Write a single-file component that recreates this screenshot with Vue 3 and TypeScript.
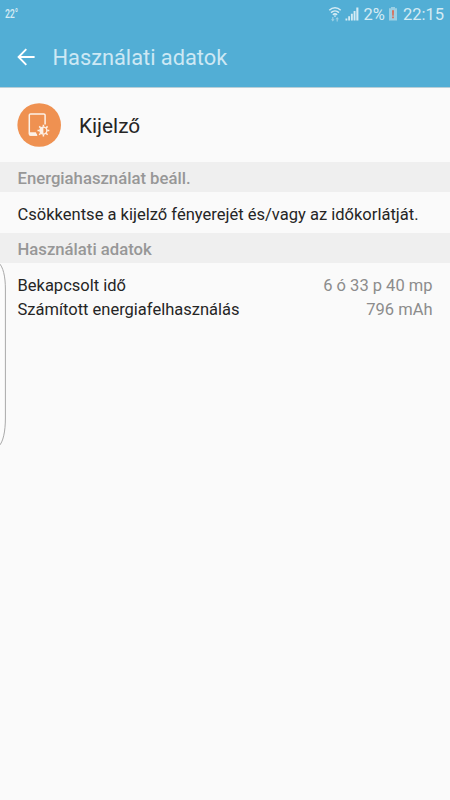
<script setup lang="ts">
import { ref } from 'vue'

type Usage = { label: string; value: string }

const title = 'Használati adatok'
const usages = ref<Usage[]>([
  { label: 'Bekapcsolt idő', value: '6 ó 33 p 40 mp' },
  { label: 'Számított energiafelhasználás', value: '796 mAh' },
])
</script>

<template>
  <div class="screen">
    <header class="header">
      <div class="status-bar">
        <span class="temperature">22°</span>
        <svg class="wifi" width="14" height="16" viewBox="0 0 14 16">
          <g fill="none" stroke="#d5ebf4" stroke-width="1.5">
            <path d="M1.3 4.2C4.6 1 9.4 1 12.7 4.2" />
            <path d="M3 6.6c2.3-2.1 5.7-2.1 8 0" />
            <path d="M4.8 8.8c1.3-1.1 3.1-1.1 4.4 0" />
          </g>
          <path d="M5.6 9.4h2.8L7 11.2z" fill="#d5ebf4" />
          <path
            d="M4.2 11h1.2v2.2h1.2L4.8 15.5 3 13.2h1.2zM8.6 15.5h1.2v-2.2H11L9.2 11l-1.8 2.3h1.2z"
            fill="#9bd0e5"
          />
        </svg>
        <svg class="signal" width="14" height="14" viewBox="0 0 14 14">
          <path
            d="M.5 11.4h1.8v2H.5zM3.2 9.2H5v4.2H3.2zM5.9 6.7h1.9v6.7H5.9zM8.6 4h1.9v9.4H8.6zM11.3.6h2.1v12.8h-2.1z"
            fill="#d5ebf4"
          />
        </svg>
        <span class="percent">2%</span>
        <svg class="battery" width="10" height="14" viewBox="0 0 10 14">
          <path d="M3 0h4v1.3h2V13.5H1V1.3H3z" fill="#9bcfe4" />
          <path d="M4 3.2h2L5.8 8.8H4.2zM4.1 9.6h1.8v1.7H4.1z" fill="#d9705c" />
        </svg>
        <span class="clock">22:15</span>
      </div>
      <div class="app-bar">
        <svg class="back" width="18" height="18" viewBox="0 0 18 18">
          <path d="M9.3 1.2L1.6 9l7.7 7.8M1.8 9H17.6" fill="none" stroke="#fff" stroke-width="1.9" />
        </svg>
        <h1 class="title">{{ title }}</h1>
      </div>
    </header>

    <div class="item">
      <svg class="item-icon" width="44" height="44" viewBox="0 0 44 44">
        <circle cx="22.2" cy="22" r="21.8" fill="#ef9151" />
        <path
          d="M28.1 21.5V12.2a1.3 1.3 0 0 0-1.3-1.3H13.6a1.3 1.3 0 0 0-1.3 1.3v18.6a1.3 1.3 0 0 0 1.3 1.3H20"
          fill="none"
          stroke="#fdf1e7"
          stroke-width="1.5"
        />
        <path d="M12.3 29.2h6.5l1.7 3.5h-7.2q-1 0-1-1z" fill="#fdf1e7" />
        <circle cx="26.4" cy="27.6" r="3.5" fill="none" stroke="#fdf1e7" stroke-width="1.4" />
        <path d="M26.4 24.1a3.5 3.5 0 0 0 0 7z" fill="#fdf1e7" />
        <path
          d="M26.4 21.7v2M26.4 31.5v2M20.5 27.6h2M30.3 27.6h2M22.2 23.4l1.5 1.5M29.1 30.3l1.5 1.5M22.2 31.8l1.5-1.5M29.1 24.9l1.5-1.5"
          stroke="#fdf1e7"
          stroke-width="1.5"
        />
      </svg>
      <span class="item-name">Kijelző</span>
    </div>

    <h2 class="section">Energiahasználat beáll.</h2>
    <p class="advice">Csökkentse a kijelző fényerejét és/vagy az időkorlátját.</p>

    <h2 class="section">{{ title }}</h2>
    <div class="usages">
      <div v-for="usage in usages" :key="usage.label" class="usage">
        <span>{{ usage.label }}</span>
        <span class="usage-value">{{ usage.value }}</span>
      </div>
    </div>

    <!-- edge panel handle, floats over the list -->
    <svg class="edge-handle" width="8" height="186" viewBox="0 0 8 186">
      <path
        d="M-1 1C3 5 5.4 14 5.4 27V156C5.4 170 3 180 -1 184"
        fill="#fcfcfc"
        stroke="#a9a9a9"
        stroke-width="1"
      />
    </svg>
  </div>
</template>

<style>
body {
  background-color: #fafafa;
}
</style>

<style scoped>
.screen {
  position: relative;
  height: 800px;
  overflow: hidden;
  background-color: #fafafa;
  color: #252525;
  font-family: Roboto, sans-serif;
  font-size: 16.5px;
}

.header {
  height: 87px;
  background-color: #52aed5;
  border-bottom: 1px solid #b9cfd8;
}

.status-bar {
  display: flex;
  align-items: center;
  height: 28px;
  padding: 0 6px 0 5px;
  box-sizing: border-box;
  color: #d5ebf4;
  white-space: nowrap;
}

.temperature {
  margin-right: auto;
  font-size: 13px;
  font-weight: 500;
  line-height: 26px;
  letter-spacing: -0.3px;
  transform: scaleX(0.68);
  transform-origin: left;
}

.wifi {
  margin-top: -1px;
}

.signal {
  margin-left: 3px;
}

.percent {
  margin-left: 5px;
}

.battery {
  margin-left: 3px;
}

.clock {
  margin-left: 5px;
}

.app-bar {
  display: flex;
  align-items: center;
  height: 59px;
  padding-left: 17px;
}

.back {
  margin-top: -2px;
}

.title {
  margin: 0 0 0 17.5px;
  color: #cde8f4;
  font-size: 21.8px;
  font-weight: 400;
}

.item {
  display: flex;
  align-items: center;
  height: 74px;
  padding-left: 17px;
}

.item-icon {
  margin-top: -1px;
}

.item-name {
  margin: 1px 0 0 18px;
  font-size: 20.8px;
}

.section {
  height: 30px;
  margin: 0;
  padding-left: 17.5px;
  background-color: #efefef;
  color: #979797;
  font-size: 16.7px;
  font-weight: 500;
  line-height: 33px;
}

.advice {
  height: 41px;
  margin: 0;
  padding-left: 17.5px;
  font-size: 16.55px;
  line-height: 45px;
  white-space: nowrap;
}

.usages {
  padding: 11px 17.5px 0;
}

.usage {
  display: flex;
  justify-content: space-between;
  line-height: 23.5px;
}

.usage-value {
  color: #8c8c8c;
}

.edge-handle {
  position: absolute;
  top: 262px;
  left: 0;
}
</style>
